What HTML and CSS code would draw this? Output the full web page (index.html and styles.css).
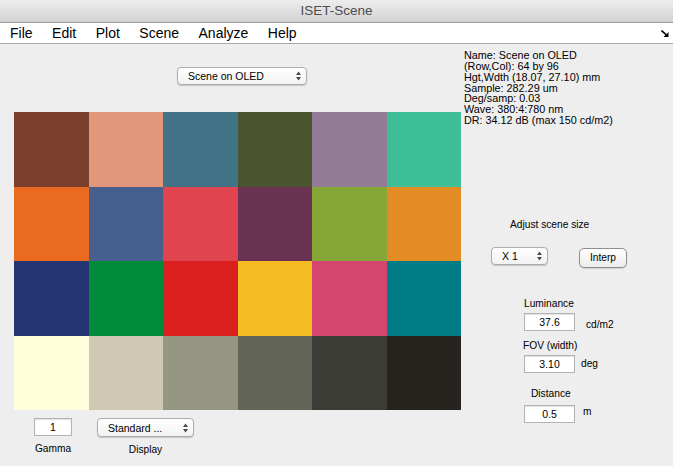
FILE: index.html
```html
<!DOCTYPE html>
<html>
<head>
<meta charset="utf-8">
<title>ISET-Scene</title>
<link rel="stylesheet" href="styles.css">
</head>
<body>
<div class="titlebar">ISET-Scene</div>
<div class="menubar">
  <span class="item">File</span>
  <span class="item">Edit</span>
  <span class="item">Plot</span>
  <span class="item">Scene</span>
  <span class="item">Analyze</span>
  <span class="item">Help</span>
  <svg class="resize" width="8" height="7" viewBox="0 0 8 7"><path d="M0.5 0.5 L6 5.5" stroke="#000" stroke-width="1.6" fill="none"/><path d="M7.5 2 L7.5 7 L2.5 7 Z" fill="#000"/></svg>
</div>
<div class="content">
  <div class="left">
    <div class="popup popup-scene"><span>Scene on OLED</span><svg class="arrows" width="5" height="10" viewBox="0 0 5 10"><path d="M0 4 L2.5 0.5 L5 4 Z M0 6 L2.5 9.5 L5 6 Z" fill="#4a4a4a"/></svg></div>
    <div class="grid">
      <div style="background:#7b3f2e"></div>
      <div style="background:#e2967a"></div>
      <div style="background:#417386"></div>
      <div style="background:#4a5530"></div>
      <div style="background:#937c98"></div>
      <div style="background:#3ebf98"></div>
      <div style="background:#ea6a20"></div>
      <div style="background:#465f8e"></div>
      <div style="background:#df444f"></div>
      <div style="background:#6a3352"></div>
      <div style="background:#86a637"></div>
      <div style="background:#e38b25"></div>
      <div style="background:#233572"></div>
      <div style="background:#008b3b"></div>
      <div style="background:#da201f"></div>
      <div style="background:#f5bd22"></div>
      <div style="background:#d4466f"></div>
      <div style="background:#007c87"></div>
      <div style="background:#ffffdc"></div>
      <div style="background:#cfc8b2"></div>
      <div style="background:#969683"></div>
      <div style="background:#636558"></div>
      <div style="background:#3c3c36"></div>
      <div style="background:#27241f"></div>
    </div>
    <div class="bottom">
      <div class="field">
        <div class="input gamma-input">1</div>
        <div class="label">Gamma</div>
      </div>
      <div class="field">
        <div class="popup display-popup"><span>Standard ...</span><svg class="arrows" width="5" height="10" viewBox="0 0 5 10"><path d="M0 4 L2.5 0.5 L5 4 Z M0 6 L2.5 9.5 L5 6 Z" fill="#4a4a4a"/></svg></div>
        <div class="label">Display</div>
      </div>
    </div>
  </div>
  <div class="right">
    <div class="info">
      <div>Name: Scene on OLED</div>
      <div>(Row,Col): 64 by 96</div>
      <div>Hgt,Wdth (18.07, 27.10) mm</div>
      <div>Sample: 282.29 um</div>
      <div>Deg/samp: 0.03</div>
      <div>Wave: 380:4:780 nm</div>
      <div>DR: 34.12 dB (max 150 cd/m2)</div>
    </div>
    <div class="label adjust-label">Adjust scene size</div>
    <div class="size-row">
      <div class="popup popup-size"><span>X 1</span><svg class="arrows" width="5" height="10" viewBox="0 0 5 10"><path d="M0 4 L2.5 0.5 L5 4 Z M0 6 L2.5 9.5 L5 6 Z" fill="#4a4a4a"/></svg></div>
      <div class="button">Interp</div>
    </div>
    <div class="label lum-label">Luminance</div>
    <div class="value-row lum-row">
      <div class="input value-input">37.6</div>
      <div class="label unit unit-lum">cd/m2</div>
    </div>
    <div class="label fov-label">FOV (width)</div>
    <div class="value-row fov-row">
      <div class="input value-input">3.10</div>
      <div class="label unit unit-fov">deg</div>
    </div>
    <div class="label dist-label">Distance</div>
    <div class="value-row dist-row">
      <div class="input value-input">0.5</div>
      <div class="label unit unit-dist">m</div>
    </div>
  </div>
</div>
</body>
</html>
```

FILE: styles.css
```css
* { box-sizing: border-box; }
html, body { margin: 0; padding: 0; }
body {
  width: 673px;
  height: 466px;
  overflow: hidden;
  background: #eeeeee;
  font-family: "Liberation Sans", Arial, sans-serif;
  color: #000;
}
.titlebar {
  height: 23px;
  background: linear-gradient(#ededed, #d3d3d3);
  border-bottom: 1px solid #9c9c9c;
  text-align: center;
  font-size: 13.5px;
  line-height: 22px;
  color: #4d4d4d;
}
.menubar {
  position: relative;
  height: 21px;
  background: #ffffff;
  border-bottom: 1px solid #a8a8a8;
  display: flex;
  align-items: flex-start;
  padding-left: 10px;
  font-size: 14px;
  line-height: 20px;
}
.menubar .item { margin-right: 19.5px; }
.resize { position: absolute; right: 4px; top: 7px; }
.content { display: flex; height: 422px; }
.left {
  width: 462px;
  padding-left: 14px;
  display: flex;
  flex-direction: column;
}
.right {
  width: 211px;
  display: flex;
  flex-direction: column;
  align-items: flex-start;
}
.popup {
  display: flex;
  align-items: center;
  justify-content: space-between;
  height: 18px;
  border: 1px solid #acacac;
  border-radius: 4px;
  background: linear-gradient(#ffffff, #f2f2f2);
  box-shadow: 0 1px 1px rgba(0, 0, 0, 0.18);
  font-size: 10.5px;
  padding: 0 5px 0 10px;
}
.arrows { flex: none; }
.popup-scene { margin-left: 163px; margin-top: 23px; width: 130px; }
.grid {
  margin-top: 27px;
  width: 447px;
  height: 298px;
  display: grid;
  grid-template-columns: repeat(6, 1fr);
  grid-template-rows: repeat(4, 1fr);
}
.bottom {
  display: flex;
  align-items: flex-start;
  margin-top: 8px;
  margin-left: 20px;
  gap: 25px;
}
.field { display: flex; flex-direction: column; align-items: center; }
.label { font-size: 10.2px; line-height: 13px; white-space: nowrap; }
.field .label { margin-top: 5.6px; }
.input {
  background: #ffffff;
  border: 1px solid #b3b3b3;
  box-shadow: inset 0 1px 1px rgba(0, 0, 0, 0.12);
  font-size: 10.5px;
  line-height: 16px;
  text-align: center;
}
.gamma-input { width: 38px; height: 18px; }
.display-popup { width: 97px; height: 19px; }
.info {
  margin-top: 6.3px;
  padding-left: 2px;
  font-size: 10.8px;
  line-height: 10.8px;
  white-space: nowrap;
}
.adjust-label { margin-top: 92.4px; margin-left: 48px; }
.size-row {
  display: flex;
  align-items: flex-start;
  margin-top: 15.7px;
  margin-left: 29px;
}
.popup-size { width: 57px; }
.button {
  margin-left: 31px;
  margin-top: 1px;
  width: 48px;
  height: 20px;
  border: 1px solid #8e8e8e;
  border-radius: 5px;
  background: linear-gradient(#ffffff, #ececec);
  box-shadow: 0 1px 1px rgba(0, 0, 0, 0.12);
  font-size: 10.2px;
  display: flex;
  align-items: center;
  justify-content: center;
}
.value-row { display: flex; align-items: flex-start; margin-left: 62px; }
.value-input { width: 51px; height: 18px; }
.lum-label { margin-top: 29.3px; margin-left: 62px; }
.lum-row { margin-top: 2.7px; }
.unit-lum { margin-left: 11px; margin-top: 5px; }
.fov-label { margin-top: 8.3px; margin-left: 61px; }
.fov-row { margin-top: 2.7px; }
.unit-fov { margin-left: 6px; margin-top: 2px; }
.dist-label { margin-top: 14.3px; margin-left: 69px; }
.dist-row { margin-top: 4.7px; }
.unit-dist { margin-left: 8px; margin-top: 0; }
```
